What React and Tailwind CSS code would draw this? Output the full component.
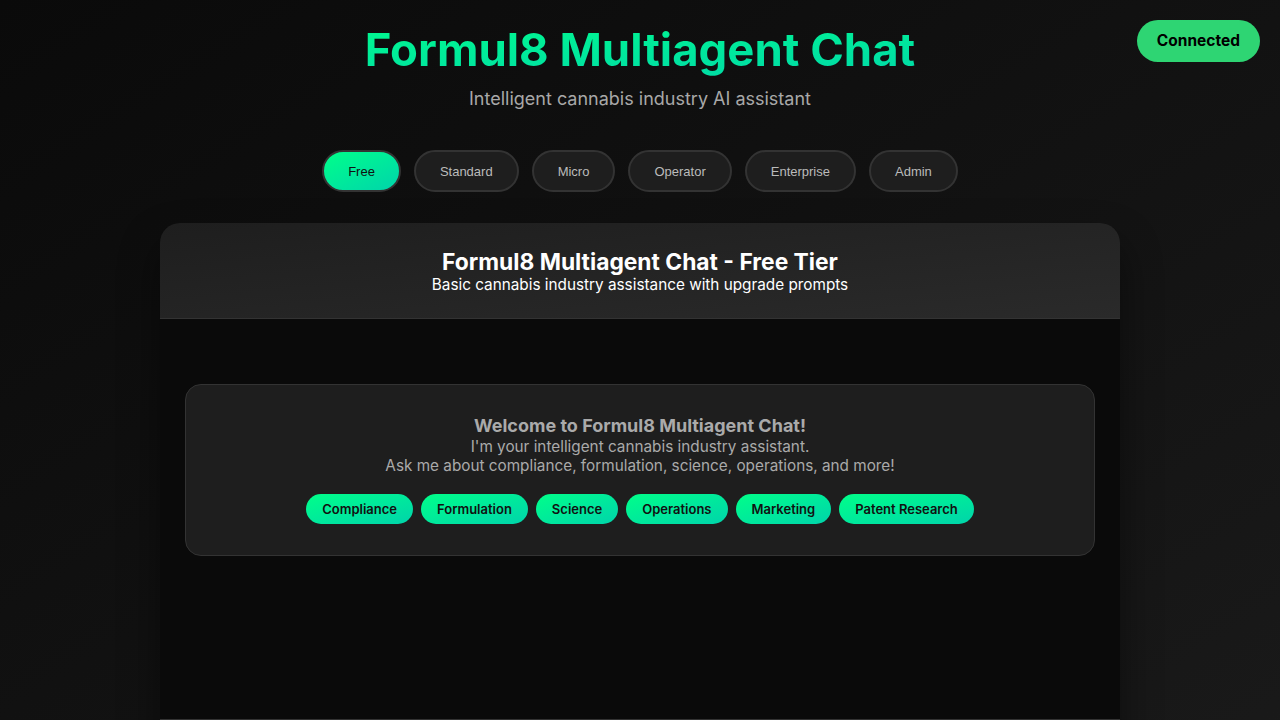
export default function App() {
  const tiers = ["Free", "Standard", "Micro", "Operator", "Enterprise", "Admin"];
  const quick = ["Compliance", "Formulation", "Science", "Operations", "Marketing", "Patent Research"];
  return (
    <div className="relative min-h-screen bg-gradient-to-br from-[#0a0a0a] to-[#1a1a1a] font-['Inter',sans-serif] text-white">
      <div className="absolute right-5 top-5 rounded-full bg-[#2ed573] px-[20px] py-[10px] text-[15.5px] leading-[22px] font-bold text-black">
        Connected
      </div>
      <div className="mx-auto w-[960px] pt-[22px]">
        <div className="text-center">
          <h1 className="bg-gradient-to-br from-[#00ff88] to-[#00d4aa] bg-clip-text text-[45.5px] leading-[55px] font-bold text-transparent">
            Formul8 Multiagent Chat
          </h1>
          <p className="mt-2 text-lg leading-[27px] text-[#a8a8a8]">Intelligent cannabis industry AI assistant</p>
        </div>
        <div className="mt-[38px] flex justify-center gap-[13px]">
          {tiers.map((t, i) => (
            <button
              key={t}
              className={
                "rounded-full border-2 border-[#333] px-6 py-[11.5px] font-['Liberation_Sans',Arial,sans-serif] text-[13px] leading-[15px] " +
                (i === 0
                  ? "bg-gradient-to-br from-[#00ff88] to-[#00d4aa] text-[#111]"
                  : "bg-[#1e1e1e] text-[#bbb]")
              }
            >
              {t}
            </button>
          ))}
        </div>
        <div className="mt-[31px] rounded-t-[20px] bg-[#0a0a0a] shadow-[0_20px_40px_rgba(0,0,0,0.45)]">
          <div className="rounded-t-[20px] border-b border-[#333] bg-gradient-to-br from-[#1e1e1e] to-[#2a2a2a] pt-[25px] pb-[24px] text-center">
            <h2 className="text-[22.8px] leading-[28px] font-bold">Formul8 Multiagent Chat - Free Tier</h2>
            <p className="text-[15.3px] leading-[18px]">Basic cannabis industry assistance with upgrade prompts</p>
          </div>
          <div className="h-[400px] px-[25px] pt-[65px]">
            <div className="rounded-2xl border border-[#333] bg-[#1e1e1e] px-[30px] pt-[30px] pb-[31px] text-center text-[#aaa]">
              <h3 className="text-lg leading-[22px] font-bold">Welcome to Formul8 Multiagent Chat!</h3>
              <p className="text-[15.3px] leading-[19px]">
                I'm your intelligent cannabis industry assistant.
                <br />
                Ask me about compliance, formulation, science, operations, and more!
              </p>
              <div className="mt-[19px] flex justify-center gap-2">
                {quick.map((q) => (
                  <button
                    key={q}
                    className="rounded-full bg-gradient-to-br from-[#00ff88] to-[#00d4aa] px-4 py-[6.5px] text-[13px] leading-[17px] font-semibold text-[#111]"
                  >
                    {q}
                  </button>
                ))}
              </div>
            </div>
          </div>
          <div className="h-[80px] border-t border-[#333] bg-[#1a1a1a]"></div>
        </div>
      </div>
    </div>
  );
}
